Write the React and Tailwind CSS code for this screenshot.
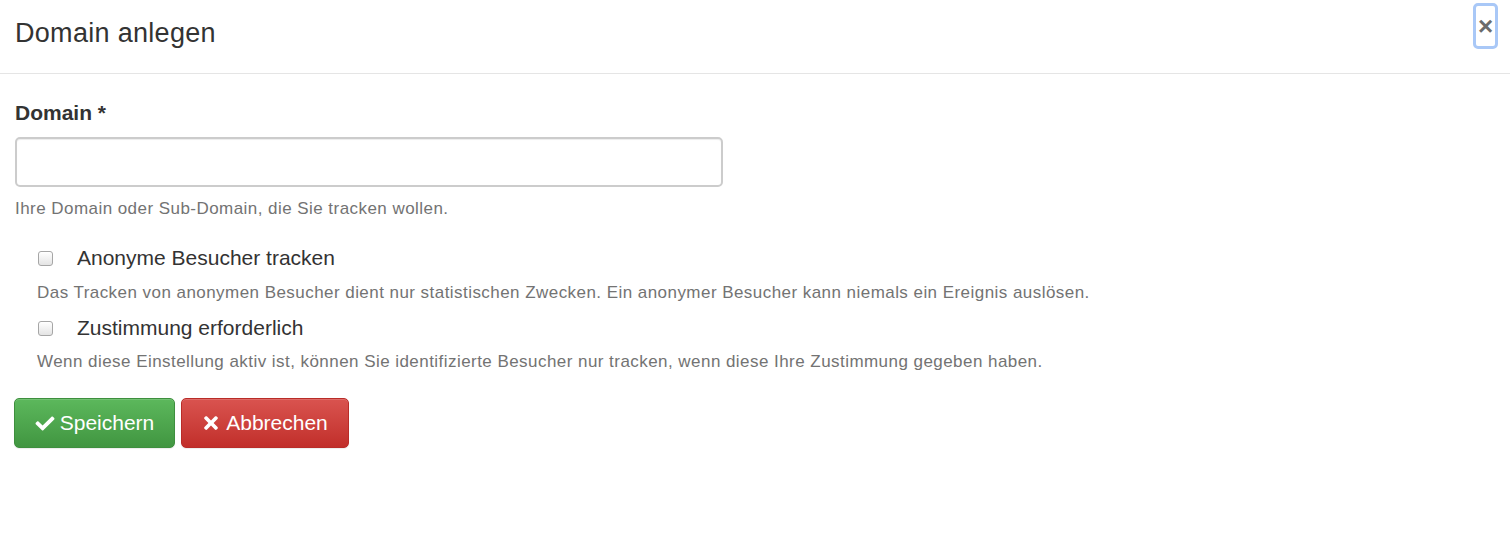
import React from 'react';
import { FaCheck, FaTimes } from 'react-icons/fa';

const Checkbox = () => (
  <span className="inline-block w-[15px] h-[15px] rounded-[3px] border border-[#a6a6a6] bg-gradient-to-b from-white to-[#e4e4e4] shadow-[inset_0_1px_0_#fff]" />
);

export default function App() {
  return (
    <div className="w-[1510px] h-[538px] bg-white text-[#333] font-['Liberation_Sans',Arial,sans-serif]">
      {/* Header */}
      <div className="h-[74px] flex items-start justify-between border-b border-[#e5e5e5] pl-[15px] pr-[12px]">
        <h4 className="mt-[17px] text-[27px] leading-[32px] tracking-[0.3px] text-[#333]">Domain anlegen</h4>
        <button className="mt-[3px] w-[25px] h-[46px] rounded-[5px] border-[3px] border-[#a9c8f7] flex items-center justify-center text-[#6b6b6b] text-[26px] font-bold leading-none">
          ×
        </button>
      </div>

      {/* Body */}
      <div className="px-[15px] pt-[25px]">
        <label className="block text-[21px] leading-[28px] font-bold">Domain *</label>
        <input
          type="text"
          className="mt-[10px] block w-[708px] h-[50px] rounded-[5px] border-2 border-[#ccc] shadow-[inset_0_1px_1px_rgba(0,0,0,0.075)] outline-none"
        />
        <p className="mt-[11px] text-[17px] leading-[22px] tracking-[0.45px] text-[#737373]">
          Ihre Domain oder Sub-Domain, die Sie tracken wollen.
        </p>

        <div className="mt-[24px] pl-[23px] flex items-center h-[28px]">
          <Checkbox />
          <span className="ml-[24px] text-[21px] leading-[28px]">Anonyme Besucher tracken</span>
        </div>
        <p className="mt-[10px] pl-[22px] text-[17px] leading-[22px] tracking-[0.45px] text-[#737373]">
          Das Tracken von anonymen Besucher dient nur statistischen Zwecken. Ein anonymer Besucher kann niemals ein Ereignis auslösen.
        </p>

        <div className="mt-[10px] pl-[23px] flex items-center h-[28px]">
          <Checkbox />
          <span className="ml-[24px] text-[21px] leading-[28px]">Zustimmung erforderlich</span>
        </div>
        <p className="mt-[9px] pl-[22px] text-[17px] leading-[22px] tracking-[0.45px] text-[#737373]">
          Wenn diese Einstellung aktiv ist, können Sie identifizierte Besucher nur tracken, wenn diese Ihre Zustimmung gegeben haben.
        </p>

        <div className="mt-[25px] flex gap-[6px] -ml-[1px]">
          <button className="h-[50px] w-[161px] rounded-[5px] border border-[#3e8f3e] bg-gradient-to-b from-[#5cb85c] to-[#419641] text-white text-[21px] flex items-center justify-center gap-[5px] shadow-[inset_0_1px_0_rgba(255,255,255,0.15),0_1px_1px_rgba(0,0,0,0.075)]">
            <FaCheck className="w-[20px] h-[19px]" />
            <span>Speichern</span>
          </button>
          <button className="h-[50px] w-[168px] rounded-[5px] border border-[#b92c28] bg-gradient-to-b from-[#d9534f] to-[#c12e2a] text-white text-[21px] flex items-center justify-center gap-[6px] shadow-[inset_0_1px_0_rgba(255,255,255,0.15),0_1px_1px_rgba(0,0,0,0.075)]">
            <FaTimes className="w-[18px] h-[20px]" />
            <span>Abbrechen</span>
          </button>
        </div>
      </div>
    </div>
  );
}
